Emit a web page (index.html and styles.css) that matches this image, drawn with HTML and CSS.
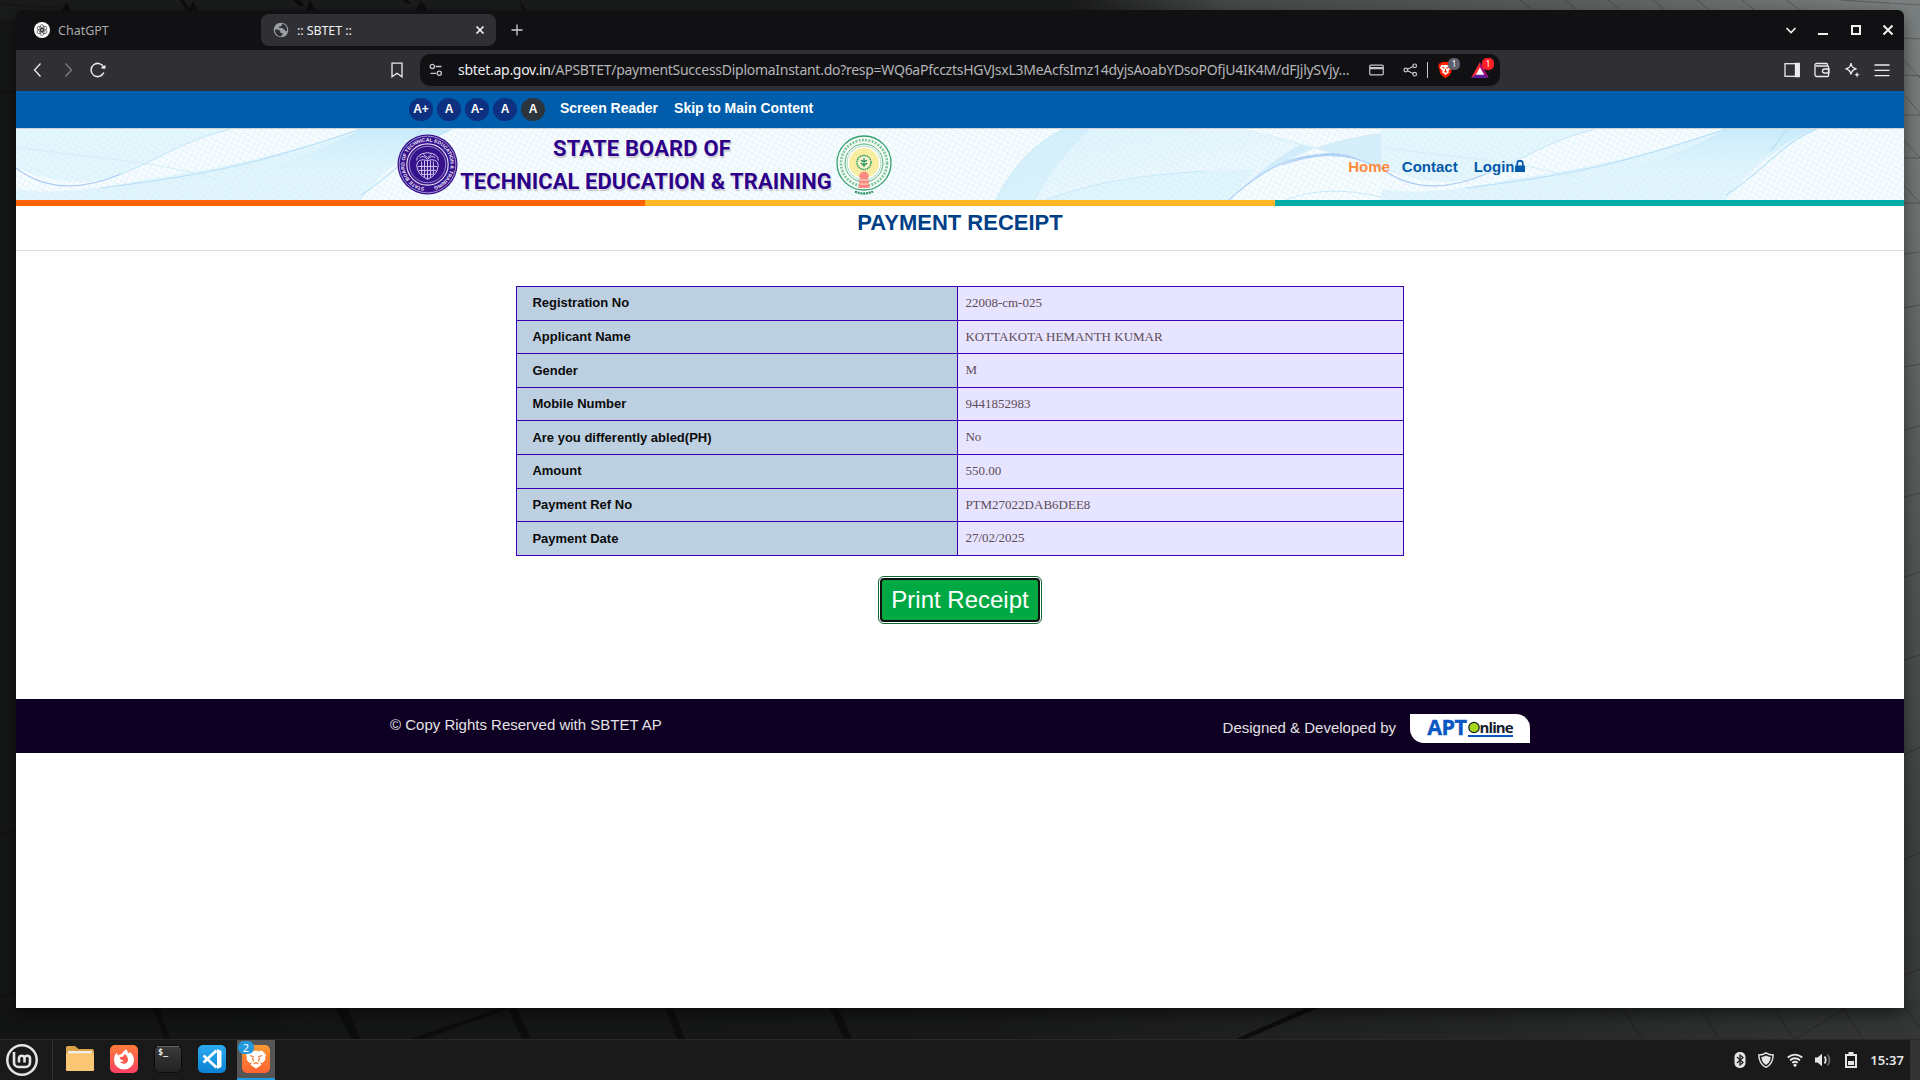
FILE: index.html
```html
<!DOCTYPE html>
<html lang="en">
<head>
<meta charset="utf-8">
<title>:: SBTET ::</title>
<link rel="stylesheet" href="styles.css">
</head>
<body>
<div class="desktop">
  <svg class="wallpaper" viewBox="0 0 1920 1080" aria-hidden="true">
    <defs>
      <linearGradient id="wTop" x1="0" x2="1"><stop offset="0" stop-color="#1a1c1b"/><stop offset=".56" stop-color="#1a1c1b"/><stop offset=".64" stop-color="#444847"/><stop offset=".8" stop-color="#565b5a"/><stop offset="1" stop-color="#7b8180"/></linearGradient>
      <linearGradient id="wRight" x1="0" x2="0" y1="0" y2="1"><stop offset="0" stop-color="#7b8180"/><stop offset=".15" stop-color="#717776"/><stop offset=".4" stop-color="#5a5e5d"/><stop offset=".75" stop-color="#3f4241"/><stop offset="1" stop-color="#353837"/></linearGradient>
      <linearGradient id="wBottom" x1="0" x2="1"><stop offset="0" stop-color="#131514"/><stop offset=".5" stop-color="#171918"/><stop offset=".8" stop-color="#252827"/><stop offset="1" stop-color="#343736"/></linearGradient>
    </defs>
    <rect width="1920" height="1080" fill="#151716"/>
    <rect width="1920" height="20" fill="url(#wTop)"/>
    <rect x="1890" width="30" height="1080" fill="url(#wRight)"/>
    <rect y="1000" width="1920" height="40" fill="url(#wBottom)"/>
    <g fill="#0c0d0d">
      <path d="M62 10l4-8 5 8zM180 0h4l6 10h-4zM189 10l4-9 5 9zM293 0h7l5 6h-6zM306 10l4-10 6 10zM403 0h5l3 4h-5zM416 10l5-10 6 10zM520 0l5 10h-3zM153 1008h6l11 31h-6zM336 1008h11l13 31h-9zM508 1008h8l15 31h-9zM410 1039l90-31h10l-85 31zM665 1008h8l12 31h-8zM830 1008h8l14 31h-8zM1236 1039l70-31h12l-72 31z"/>
    </g>
    <g class="wallpaper-lines">
      <path d="M0 4l60 4M0 93l16-1M0 834l16-4M0 997l16-4"/>
      <path d="M1520 0l12 10M1565 0l12 10M1608 0l12 10M1653 0l12 10M1697 0l12 10M1742 0l12 10M1787 0l12 10M1840 0l80 5M1904 38l16 1M1904 75l16 1M1904 115h16M1904 158h16M1904 203h16M1904 60l16 18M1904 95l16 18M1904 140l16 18M1904 185l16 18M1904 254l16-2M1904 308l16-3M1904 367l16-3M1904 430l16-4M1904 497l16-4M1904 577l16-5M1904 660l16-5M1904 755l16-8M1904 860l16-8M1904 975l16-6"/>
      <path d="M1622 1008l20 31M1700 1008l19 31M1773 1008l21 31M1843 1008l20 31M1600 1014l10-6M1795 1039l51-31M1905 1008l15 20"/>
    </g>
  </svg>

  <main class="window">
    <header class="tabstrip">
      <div class="tab">
        <svg class="favicon" viewBox="0 0 16 16"><circle cx="8" cy="8" r="8" fill="#fff"/><g fill="none" stroke="#333" stroke-width=".65"><ellipse cx="8" cy="6" rx="2.100" ry="3.500"/><ellipse cx="8" cy="6" rx="2.100" ry="3.500" transform="rotate(60 8 8)"/><ellipse cx="8" cy="6" rx="2.100" ry="3.500" transform="rotate(120 8 8)"/><ellipse cx="8" cy="6" rx="2.100" ry="3.500" transform="rotate(180 8 8)"/><ellipse cx="8" cy="6" rx="2.100" ry="3.500" transform="rotate(240 8 8)"/><ellipse cx="8" cy="6" rx="2.100" ry="3.500" transform="rotate(300 8 8)"/></g></svg>
        <span class="tab-title tab-title-chat">ChatGPT</span>
      </div>
      <div class="tab tab-active">
        <svg class="favicon favicon-globe" viewBox="0 0 16 16"><circle cx="8" cy="8" r="7.300" fill="#9aa0a6"/><path d="M2 7.500h3.500l2 2v1.500h2v1.500L8 14.500C4.500 14.500 1.800 11.500 2 7.500zM9 1.800L9 3 7.500 4.500H6V6h3.500l1 1.500h1.500V9H14C14.700 5 12 2 9 1.800z" fill="#303034"/></svg>
        <span class="tab-title">:: SBTET ::</span>
        <svg class="tab-close" viewBox="0 0 10 10"><path d="M1.500 1.500l7 7m0-7l-7 7"/></svg>
      </div>
      <svg class="new-tab" viewBox="0 0 12 12"><path d="M6 .5v11M.5 6h11"/></svg>
      <div class="window-buttons">
        <svg viewBox="0 0 12 12"><path d="M1.500 4l4.500 4.500L10.500 4"/></svg>
        <svg viewBox="0 0 12 12"><path d="M1 10h10"/></svg>
        <svg viewBox="0 0 12 12"><path d="M2 2h8v8H2z"/></svg>
        <svg viewBox="0 0 12 12"><path d="M1.500 1.500l9 9m0-9l-9 9"/></svg>
      </div>
    </header>

    <nav class="toolbar">
      <div class="nav-buttons">
        <svg viewBox="0 0 16 16"><path d="M10.500 1.500L4.500 8l6 6.500"/></svg>
        <svg class="dim" viewBox="0 0 16 16"><path d="M5.500 1.500l6 6.500-6 6.500"/></svg>
        <svg viewBox="0 0 16 16"><path d="M13.800 5.500A6.600 6.600 0 1 0 13.800 10.500" stroke-width="1.500"/><path d="M10.800 5.800Q13 7.500 15.500 6.500V3z" fill="#ececef" stroke="none"/></svg>
      </div>
      <svg class="bookmark" viewBox="0 0 16 16"><path d="M3 1.200h10v13.600l-5-3.600-5 3.600z"/></svg>
      <div class="address">
        <svg class="site-settings" viewBox="0 0 14 14"><circle cx="3.300" cy="3.500" r="2.100"/><path d="M6.500 3.500h6M1.500 10.300h5.500"/><circle cx="10.300" cy="10.300" r="2.100"/></svg>
        <span class="url"><b>sbtet.ap.gov.in</b>/APSBTET/paymentSuccessDiplomaInstant.do?resp=WQ6aPfccztsHGVJsxL3MeAcfsImz14dyjsAoabYDsoPOfjU4IK4M/dFJjlySVjy…</span>
        <svg class="icon-card" viewBox="0 0 16 12"><rect x=".8" y=".8" width="14.400" height="10.400" rx="1.200"/><path d="M1 4h14" stroke-width="2.600"/></svg>
        <svg class="icon-share" viewBox="0 0 16 14"><circle cx="3" cy="7" r="1.900"/><circle cx="12.500" cy="2.500" r="1.900"/><circle cx="12.500" cy="11.500" r="1.900"/><path d="M4.800 6.200l6-2.900M4.800 7.800l6 2.900"/></svg>
        <i class="divider"></i>
        <span class="badged">
          <svg class="icon-brave" viewBox="0 0 16 18"><path d="M4 .5h8l1.500 1.500h1.500l.8 3-1 2-1 5.500-2.200 2.700L8 17.800l-3.600-2.600-2.200-2.700-1-5.500-1-2L1 2h1.500z" fill="#fb1f00"/><path d="M4 3.500l2 .5 2-.5 2 .5 2-.5 1.800 2.500-.8 2-2 2 .8 1.500L8 14.200l-3.800-2.700.8-1.500-2-2-.8-2z" fill="#fff"/><path d="M4.500 6l2.500 1.200M11.500 6L9 7.200M8 8v2.500M6.200 11.500L8 10.700l1.800.8" stroke="#fb1f00" stroke-width="1.100" fill="none"/></svg>
          <em class="badge badge-gray">1</em>
        </span>
        <span class="badged">
          <svg class="icon-bat" viewBox="0 0 18 16"><path d="M9 0L0 16l9-5.500z" fill="#ff2c2f"/><path d="M9 0l9 16-9-5.500z" fill="#a80f78"/><path d="M0 16h18L9 10z" fill="#5c1d9c"/><path d="M9 5.500l4.200 7.200H4.800z" fill="#fff"/></svg>
          <em class="badge badge-red">1</em>
        </span>
      </div>
      <div class="toolbar-icons">
        <svg viewBox="0 0 16 16"><rect x="1" y="1.700" width="14" height="12.600"/><path d="M11.500 1.500h3.700v13h-3.700z" fill="#ececef"/></svg>
        <svg class="icon-wallet" viewBox="0 0 16 16"><path d="M13.500 4V2.500a1 1 0 0 0-1-1H2.500a1.500 1.500 0 0 0-1.500 1.500v10a1.500 1.500 0 0 0 1.500 1.500H13.500a1 1 0 0 0 1-1V5a1 1 0 0 0-1-1H2M15 7h-4.500a2 2 0 0 0 0 4H15z"/></svg>
        <svg viewBox="0 0 16 16"><path d="M7 1.200c.5 3.800 1.800 5 5.500 5.600C8.800 7.400 7.500 8.800 7 12.500 6.500 8.800 5.200 7.400 1.500 6.800 5.200 6.200 6.500 5 7 1.200z"/><path d="M13 10l.8 2 1.900.8-1.900.8-.8 2-.8-2-1.900-.8 1.900-.8z" fill="#ececef" stroke="none"/></svg>
        <svg viewBox="0 0 16 16"><path d="M.5 3h15M.5 8.300h15M.5 13.600h15"/></svg>
      </div>
    </nav>

    <section class="page">
      <div class="access-bar">
        <ul class="text-size">
          <li>A+</li><li>A</li><li>A-</li><li>A</li><li class="dark">A</li>
        </ul>
        <a>Screen Reader</a>
        <a>Skip to Main Content</a>
      </div>

      <div class="banner">
        <svg class="banner-art" viewBox="0 0 1888 71" aria-hidden="true">
          <defs>
            <pattern id="mesh" width="5" height="5" patternUnits="userSpaceOnUse" patternTransform="rotate(28)"><path d="M0 1h5M2 0v5" stroke="#cdeaf4" stroke-width=".8" opacity=".6"/></pattern>
            <linearGradient id="sky" x1="0" y1="0" x2="1" y2="1"><stop offset="0" stop-color="#c4eafb"/><stop offset="1" stop-color="#f1fbff"/></linearGradient>
            <linearGradient id="fadeDown" x1="0" y1="0" x2="0" y2="1"><stop offset="0" stop-color="#bfe8fb"/><stop offset="1" stop-color="#f1fbff" stop-opacity=".2"/></linearGradient>
            <g id="waves" fill="none">
              <path d="M0 0H215C165 12 145 30 105 45 80 55 50 58 0 39z" fill="#e6f7fe"/>
              <path d="M0 60Q50 68 130 50 230 38 345 0H436Q390 12 345 71H0z" fill="#d2f0fd" opacity=".55"/>
              <path d="M230 45Q290 30 346 0H436Q395 14 350 66 300 50 230 45z" fill="url(#fadeDown)" opacity=".8"/>
              <path d="M0 39C30 62 65 62 105 45" stroke="#a5c4f7" stroke-width="1.300"/>
              <path d="M105 45C145 30 165 12 215 0" stroke="#c2e4f8"/>
              <path d="M85 59C200 45 250 32 345 0M436 0C400 14 380 45 345 66M406 0L390 22" stroke="#b0dcf8" stroke-width="1.100"/>
              <path d="M0 18C80 30 130 30 200 50" stroke="#d5eef9"/>
              <path d="M980 71Q1005 20 1048 0H1230Q1270 10 1300 18 1260 32 1213 71z" fill="url(#sky)" opacity=".5"/>
              <path d="M980 71Q1005 20 1048 0H1075Q1040 30 1020 71z" fill="#bde8fb" opacity=".35"/>
              <path d="M1030 71Q1110 42 1240 40L1213 71z" fill="#def5fe" opacity=".8"/>
              <path d="M1230 0Q1290 16 1365 39V4Q1320 10 1292 22 1255 38 1213 71 1255 30 1285 16z" fill="#b5e0f9" opacity=".5"/>
              <path d="M1213 71C1249 38 1277 25.500 1312 25.500 1332 25.500 1345 31 1365 39V71z" fill="#fafeff" opacity=".85"/>
              <path d="M1213 71C1249 38 1277 25.500 1312 25.500 1332 25.500 1345 31 1365 39" stroke="#aecdf9" stroke-width="1.300"/>
              <path d="M1265 37Q1282 27 1312 24 1330 24 1345 31 1330 27.500 1312 27 1288 28 1265 37z" fill="#a9cdf7"/>
              <path d="M1030 71C1080 52 1130 46 1190 42M980 71Q1005 20 1048 0M1270 71Q1310 55 1365 68" stroke="#c6e8f8"/>
            </g>
          </defs>
          <rect width="1888" height="71" fill="#f9fdff"/>
          <use href="#waves"/><use href="#waves" x="1365"/>
          <rect width="1888" height="71" fill="url(#mesh)"/>
        </svg>
        <div class="brand">
          <svg class="seal" viewBox="0 0 62 62">
            <defs><path id="sealRing" d="M31 54.500A23.500 23.500 0 1 1 31.100 54.500"/></defs>
            <circle cx="31" cy="31" r="30.500" fill="#36128c"/><circle cx="31" cy="31" r="28.800" fill="none" stroke="#cfc4ea" stroke-width=".7"/>
            <circle cx="31" cy="31" r="21" fill="none" stroke="#e4dcf4" stroke-width="1.200"/><circle cx="31" cy="31" r="18.500" fill="none" stroke="#b4a6d8" stroke-width=".8"/>
            <text class="seal-text"><textPath href="#sealRing" startOffset="3" textLength="138" lengthAdjust="spacingAndGlyphs">STATE BOARD OF TECHNICAL EDUCATION &amp; TRAINING</textPath></text>
            <g fill="none" stroke="#d5caec" stroke-width="1"><path d="M20 27q0-7 11-8 11 1 11 8M31 27q-10-3-11 5 1 10 11 14 10-4 11-14-1-8-11-5z"/><path d="M23 24q4-3 8 2 4-5 8-2M27 21l4 3 4-3M25 28v13M28 27v17M31 27v19M34 27v17M37 28v13M21 33h20M22 37h18M25 41h12"/></g>
          </svg>
          <div class="brand-name"><span class="line1">STATE BOARD OF</span><span class="line2">TECHNICAL EDUCATION &amp; TRAINING</span></div>
          <svg class="emblem" viewBox="0 0 56 62">
            <circle cx="28" cy="29" r="27" fill="#f4fbf4" stroke="#36a070" stroke-width="1.300"/><circle cx="28" cy="29" r="23" fill="none" stroke="#7fc5a0" stroke-width="2.600" stroke-dasharray="2 1.300"/>
            <circle cx="28" cy="29" r="19" fill="#fff" stroke="#52ae80"/><circle cx="28" cy="29" r="17" fill="none" stroke="#8accaa" stroke-width=".8"/><circle cx="28" cy="29" r="15" fill="#f8eda0"/>
            <circle cx="28" cy="28.500" r="7" fill="#fbf6cc" stroke="#3a9d6c" stroke-width="1.500" stroke-dasharray="1.600 .6"/><path d="M28 24v9M25 29q3 4 6 0M25 26q3 3 6 0" fill="none" stroke="#2e9663" stroke-width="1.300"/>
            <path d="M24.500 39q3.500-3 7 0l1.500 3-1.500 4h1l1 8H22.500l1-8h1L23 42z" fill="#fb8b80"/><path d="M24 46h8M24 50h8" stroke="#fde0d0"/>
            <path d="M19 57.500q9 4 18 0" fill="none" stroke="#2e9663" stroke-width="2.400" stroke-dasharray="2 .8"/>
          </svg>
        </div>
        <div class="site-nav">
          <a class="current">Home</a><a>Contact</a><a>Login<svg class="lock" viewBox="0 0 10 12"><path d="M0 5.500h10V12H0z" fill="#0459a8"/><path d="M2.200 6V3.600a2.800 2.800 0 0 1 5.600 0V6" fill="none" stroke="#0459a8" stroke-width="1.700"/></svg></a>
        </div>
      </div>
      <div class="stripes"><i></i><i></i><i></i></div>

      <h1>PAYMENT RECEIPT</h1>

      <table class="receipt">
        <tr><th>Registration No</th><td>22008-cm-025</td></tr>
        <tr><th>Applicant Name</th><td>KOTTAKOTA HEMANTH KUMAR</td></tr>
        <tr><th>Gender</th><td>M</td></tr>
        <tr><th>Mobile Number</th><td>9441852983</td></tr>
        <tr><th>Are you differently abled(PH)</th><td>No</td></tr>
        <tr><th>Amount</th><td>550.00</td></tr>
        <tr><th>Payment Ref No</th><td>PTM27022DAB6DEE8</td></tr>
        <tr><th>Payment Date</th><td>27/02/2025</td></tr>
      </table>
      <button class="print" type="button">Print Receipt</button>

      <footer class="site-footer">
        <span class="copyright">© Copy Rights Reserved with SBTET AP</span>
        <span class="credit">Designed &amp; Developed by
          <span class="apt"><b>APT</b><span class="online"><svg viewBox="0 0 12 12"><circle cx="6" cy="6" r="5.200" fill="#a6d71c" stroke="#14202c" stroke-width="1.200"/></svg>nline</span></span>
        </span>
      </footer>
    </section>
  </main>

  <footer class="taskbar">
    <svg class="mint" viewBox="0 0 32 32"><circle cx="16" cy="16" r="14.700" fill="none" stroke="#e4e4e4" stroke-width="2.500"/><path d="M8 8v10.500a4.500 4.500 0 0 0 4.500 4.500h7a4.500 4.500 0 0 0 4.500-4.500V14a2.800 2.800 0 0 0-5.500 0v4.500M18.500 14a2.800 2.800 0 0 0-5.500 0v4.500" fill="none" stroke="#e4e4e4" stroke-width="2.600"/></svg>
    <i class="sep"></i>
    <div class="launchers">
      <svg viewBox="0 0 28 28"><path d="M0 2.500Q0 1 1.500 1H9l3.500 3H26q2 0 2 2v6H0z" fill="#d9a347"/><path d="M2 6h24v4H2z" fill="#eee"/><path d="M0 8.200h28V25q0 1-1 1H1q-1 0-1-1z" fill="#fac673"/></svg>
      <svg viewBox="0 0 28 28"><defs><linearGradient id="ff" x2="0" y2="1"><stop stop-color="#ff7b39"/><stop offset="1" stop-color="#ff4163"/></linearGradient></defs><rect width="28" height="28" rx="5" fill="url(#ff)"/><path d="M6.500 7.500l1.500 3q1.500-1.500 4-1.500 0-1.500 1.500-2.500l3-2.500q.2 2.500 2.500 4.500l1-1.500q4 3.500 4 8a10 9.500 0 0 1-20 0q0-4.500 2.500-7.500z" fill="#fff"/><path d="M9.500 12l3.500-.3 1.500-2.700q3.800 2.500 3.500 6.500a4.500 4.300 0 0 1-8 1.500q2.500.5 3.500-1.500-3.500-.5-4-3.500z" fill="#ff5a4c"/></svg>
      <svg viewBox="0 0 28 28"><defs><linearGradient id="tm" x2="0" y2="1"><stop stop-color="#3b3b3b"/><stop offset="1" stop-color="#222"/></linearGradient></defs><rect x=".5" y=".5" width="27" height="27" rx="5" fill="url(#tm)" stroke="#0c0c0c"/><path d="M3 1.500h22" stroke="#626262"/><text class="prompt" x="4" y="10">$_</text></svg>
      <svg viewBox="0 0 28 28"><defs><linearGradient id="vs" x2="0" y2="1"><stop stop-color="#2aabf0"/><stop offset="1" stop-color="#0b82d4"/></linearGradient></defs><rect width="28" height="28" rx="5" fill="url(#vs)"/><path d="M19 4l4.500 2v16L19 24z" fill="#fff"/><path d="M18.500 5.500L5.500 17.500M18.500 22.500L5.500 10.500" stroke="#fff" stroke-width="2.800" fill="none"/></svg>
      <span class="active-app">
        <svg viewBox="0 0 28 28"><defs><linearGradient id="br" x2="0" y2="1"><stop stop-color="#f99b33"/><stop offset="1" stop-color="#ff6230"/></linearGradient></defs><rect width="28" height="28" rx="5" fill="url(#br)"/><path d="M8 5.500l3 .7 3-.7 3 .7 3-.7 4 4.500-1 2.500.5 2-3 3.500-2.200-.8 1 2.800L14 23.500 8.700 20l1-2.800-2.200.8-3-3.500.5-2L4 10z" fill="#fff"/><path d="M8 10.500l4 1.500M20 10.500L16 12M11.500 19L14 17.500l2.500 1.500M10.500 13l1 3.500M17.500 13l-1 3.500" stroke="#fb7831" stroke-width="1.300" fill="none"/></svg>
        <em class="count">2</em>
      </span>
    </div>
    <div class="tray">
      <svg viewBox="0 0 16 16"><rect x="2.500" width="11" height="16" rx="5" fill="#e6e6e6"/><path d="M5 5l6 5.500-3 2.500V3l3 2.500L5 11" fill="none" stroke="#1a1a1a" stroke-width="1.200"/></svg>
      <svg viewBox="0 0 16 16"><path d="M8 .8q3 2 7.200 2.200Q15 12 8 15.300 1 12 .8 3 5 2.800 8 .8z" fill="#1a1a1a" stroke="#e6e6e6" stroke-width="1.400"/><path d="M8 3.500q2 1.200 4.700 1.500Q12.300 10.500 8 13 3.700 10.500 3.300 5 6 4.700 8 3.500z" fill="#e6e6e6"/></svg>
      <svg class="wifi" viewBox="0 0 16 16"><g fill="none" stroke="#e6e6e6" stroke-width="1.800"><path d="M.7 5.500q7.300-5.800 14.600 0M3 8.300q5-4 10 0M5.200 10.900q2.800-2.200 5.600 0"/></g><path d="M8 11.500l2 1.500-2 2.300L6 13z" fill="#e6e6e6"/></svg>
      <svg viewBox="0 0 16 16"><path d="M0 5.500h2.500L7 1.800v12.400L2.500 10.500H0z" fill="#e6e6e6"/><path d="M9.500 4.500q2.500 3.500 0 7" fill="none" stroke="#e6e6e6" stroke-width="1.800"/><path d="M12.500 2.500q4 5.500 0 11" fill="none" stroke="#666" stroke-width="1.800"/></svg>
      <svg viewBox="0 0 16 16"><path d="M5.500 0h5v2H14v14H2V2h3.500z" fill="#e6e6e6"/><path d="M4 4h8v10H4z" fill="#1a1a1a"/><path d="M5 9h6v4H5z" fill="#e6e6e6"/></svg>
      <time>15:37</time>
      <i class="show-desktop"></i>
    </div>
  </footer>
</div>
</body>
</html>
```
FILE: styles.css
```css
* { box-sizing: border-box; }
body { margin: 0; font-family: "Liberation Sans", Arial, sans-serif; }
svg { display: block; flex: none; }
i, em { font-style: normal; }

.desktop { position: relative; width: 1920px; height: 1080px; overflow: hidden; display: flex; flex-direction: column; justify-content: space-between; }
.wallpaper { position: absolute; inset: 0; width: 1920px; height: 1080px; }
.wallpaper-lines { fill: none; stroke: #000; stroke-opacity: .25; }

/* Browser window */
.window { position: relative; margin: 10px 16px 0; height: 998px; display: flex; flex-direction: column; border-radius: 6px 6px 0 0; overflow: hidden; box-shadow: 0 6px 16px rgba(0,0,0,.5); }
.tabstrip { height: 40px; flex: none; background: #111113; display: flex; align-items: center; padding: 0 10px 0 8px; font: 12.500px "Noto Sans", sans-serif; }
.tab { width: 235px; height: 32px; padding: 0 10px; display: flex; align-items: center; gap: 8px; border-radius: 8px; color: #a9a9ad; margin-right: 2px; }
.tab-active { background: #303034; color: #f1f1f3; padding: 0 11px 0 12px; }
.favicon { width: 16px; height: 16px; }
.tab-title { flex: 1; font-size: 12.500px; letter-spacing: -.1px; white-space: nowrap; }
.tab-title-chat { letter-spacing: 0; }
.tab-close { width: 10px; height: 10px; stroke: #f1f1f3; stroke-width: 1.700; }
.new-tab { width: 12px; height: 12px; margin-left: 13px; stroke: #d0d0d3; stroke-width: 1.300; }
.window-buttons { margin-left: auto; display: flex; gap: 20.500px; }
.window-buttons svg { width: 12px; height: 12px; fill: none; stroke: #f0f0f0; stroke-width: 2; }
.window-buttons svg:first-child { stroke-width: 1.600; }

.toolbar { height: 41px; flex: none; background: #303034; display: flex; align-items: center; padding: 0 14px 2px; }
.toolbar svg { fill: none; stroke: #ececef; stroke-width: 1.300; }
.nav-buttons { display: flex; gap: 14px; }
.nav-buttons svg { width: 16px; height: 16px; }
.nav-buttons .dim { stroke: #7d7d82; }
.bookmark { width: 16px; height: 16px; margin-left: 283px; }
.address { width: 1080px; height: 32px; margin: 1px 0 0 15px; padding: 0 0 1px 9px; border-radius: 10px; background: #111113; display: flex; align-items: center; }
.toolbar .address svg { stroke: #c9c9cd; }
.site-settings { width: 14px; height: 14px; }
.url { width: 894px; margin-left: 15px; color: #b4b4b8; font: 14px "Noto Sans", sans-serif; letter-spacing: -.27px; white-space: nowrap; }
.url b { font-weight: 400; color: #ececef; }
.icon-card { width: 15px; height: 12px; margin-left: 17px; }
.icon-share { width: 15px; height: 14px; margin-left: 19px; }
.divider { width: 1px; height: 16px; margin-left: 9px; background: #c9c9cd; }
.badged { position: relative; margin-left: 10px; }
.badged + .badged { margin-left: 18px; }
.toolbar .address .badged svg { stroke: none; }
.icon-brave { width: 15px; height: 18px; }
.icon-bat { width: 18px; height: 16px; }
.badge { position: absolute; left: 10px; top: -3px; width: 12px; height: 12px; border-radius: 5px; color: #fff; font: 8px/12px "Noto Sans", sans-serif; text-align: center; }
.badge-gray { background: #5e5e6c; }
.badge-red { background: #ff2027; left: 11px; top: -4px; }
.toolbar-icons { margin-left: auto; display: flex; gap: 14px; }
.toolbar-icons svg { width: 16px; height: 16px; }

/* Page */
.page { flex: 1; background: #fff; display: flex; flex-direction: column; }
.access-bar { height: 38px; background: #005dab; border-bottom: 1px solid #cfd2d4; padding: 0 0 3px 393px; display: flex; align-items: center; color: #fff; font-weight: 700; font-size: 14px; }
.access-bar a + a { margin-left: 16px; }
.text-size { display: flex; gap: 4px; list-style: none; margin: 3px 15px 0 0; padding: 0; font-size: 12px; }
.text-size li { width: 24px; height: 23px; border-radius: 50%; background: #0d3180; line-height: 22px; text-align: center; }
.text-size .dark { background: #2c353c; }

.banner { position: relative; height: 71px; display: flex; justify-content: space-between; padding: 0 379.500px 0 380.500px; }
.banner-art { position: absolute; inset: 0; width: 1888px; height: 71px; }
.brand { position: relative; display: flex; align-items: center; }
.seal { width: 61px; height: 61px; }
.seal-text { font: 700 5px "Liberation Sans", sans-serif; fill: #f2edfb; }
.brand-name { width: 378px; display: flex; flex-direction: column; align-items: center; font: 700 22px/33px Roboto, sans-serif; color: #2c0089; text-shadow: 0 0 2px #fff, 1px 2px 1px #c4c4cc; white-space: nowrap; }
.line1 { letter-spacing: .15px; margin-right: 9px; }
.line2 { letter-spacing: .04px; margin-right: 1px; }
.emblem { width: 56px; height: 62px; }
.site-nav { position: relative; display: flex; align-items: center; padding-top: 4px; font-weight: 700; font-size: 15px; color: #0459a8; }
.site-nav a { display: flex; align-items: center; }
.site-nav a + a { margin-left: 12px; }
.site-nav a:last-child { margin-left: 16px; }
.site-nav .current { color: #ff8a3c; }
.lock { width: 10px; height: 12px; margin-top: -2px; }

.stripes { display: grid; grid-template-columns: repeat(3, 1fr); height: 6px; }
.stripes i { background: #ff6200; }
.stripes i:nth-child(2) { background: #ffb727; }
.stripes i:nth-child(3) { background: #00aca8; }
h1 { margin: 0; height: 45px; padding-top: 4px; border-bottom: 1px solid #ddd; font-size: 22px; line-height: 25px; color: #003f85; text-align: center; }

.receipt { width: 888px; margin: 35px auto 0; border-collapse: collapse; table-layout: fixed; font-size: 13px; }
.receipt tr { height: 33.600px; }
.receipt th, .receipt td { border: 1px solid #3b00b3; text-align: left; padding: 0 7.400px .8px; }
.receipt th { width: 441px; background: #bdd0e1; color: #0b0b0b; padding-left: 15.400px; }
.receipt td { background: #e7e4ff; color: #5d4c57; font-family: "Liberation Serif", serif; padding-bottom: .6px; }
.print { align-self: center; width: 160px; height: 44px; margin-top: 22px; padding: 0; background: #00a843; color: #fff; border: 2px solid #101010; border-radius: 4px; outline: 1px solid #0b6c36; outline-offset: 1px; font: 24px "Liberation Sans", Arial, sans-serif; }

.site-footer { height: 54px; margin-top: 77px; padding: 0 374px; background: #0e0022; color: #e4e2e6; font-size: 15px; display: flex; justify-content: space-between; align-items: center; }
.copyright { padding-bottom: 3px; }
.credit { display: flex; align-items: center; gap: 14px; padding-top: 4px; }
.apt { width: 120px; height: 29px; margin-top: 1px; border-radius: 0 14px 0 14px; background: #fff; display: flex; justify-content: center; align-items: center; font-family: "Open Sans", sans-serif; }
.apt b { font-size: 21.500px; font-weight: 700; line-height: 24px; color: #0857c3; -webkit-text-stroke: .4px #0857c3; letter-spacing: -.5px; margin-top: -2px; }
.online { display: flex; align-items: center; height: 17px; margin: 0 0 0 1px; border-bottom: 2px solid #0857c3; color: #14202c; font-size: 15px; font-weight: 700; letter-spacing: -.9px; }
.online svg { width: 12px; height: 13px; }

/* Desktop panel */
.taskbar { position: relative; height: 41px; flex: none; background: #1a1a1a; border-top: 1px solid #292929; display: flex; align-items: center; padding-left: 6px; }
.mint { width: 32px; height: 32px; }
.sep { width: 1px; height: 38px; margin-left: 14px; background: #343434; }
.launchers { display: flex; align-items: center; align-self: stretch; gap: 16px; margin-left: 13px; }
.launchers svg { width: 28px; height: 28px; margin-top: -2px; }
.prompt { font: 700 8.500px "DejaVu Sans Mono", monospace; fill: #f0f0f0; }
.active-app { position: relative; width: 38px; height: 40px; margin-left: -5px; background: #555; border-bottom: 2px solid #1d9be0; display: flex; justify-content: center; align-items: center; }
.active-app svg { margin-top: 0; }
.count { position: absolute; left: 1px; top: 1px; width: 16px; height: 13px; border-radius: 6px; background: #2399db; color: #fff; font: 11px/13px "Noto Sans", sans-serif; text-align: center; }
.tray { margin-left: auto; display: flex; align-items: center; align-self: stretch; gap: 12px; }
.tray svg { width: 16px; height: 16px; }
.tray svg:first-child { margin-right: -2px; }
.tray .wifi { margin-left: 1px; }
.tray time { margin-left: -1px; color: #e6e6e6; font: 600 13px "Noto Sans", sans-serif; letter-spacing: .1px; }
.show-desktop { width: 10px; align-self: stretch; margin-left: -6px; background: #333; }
```
